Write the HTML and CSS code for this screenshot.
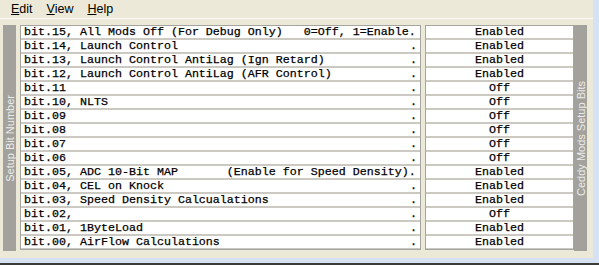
FILE: index.html
```html
<!DOCTYPE html>
<html lang="en">

  <head>
    <meta charset="UTF-8">
    <meta name="viewport" content="width=device-width, initial-scale=1.0">
    <title>Ceddy Mods Setup Bits</title>
    <link rel="stylesheet" href="styles.css">
  </head>

  <body>
    <div class="window">
      <div class="menubar">
        <span class="menu"><u>E</u>dit</span>
        <span class="menu"><u>V</u>iew</span>
        <span class="menu"><u>H</u>elp</span>
      </div>

      <div class="content">
        <div class="sidebar left"><span>Setup Bit Number</span></div>

        <div class="grid names">
          <div class="cell"><span class="label">bit.15, All Mods Off (For Debug Only)   0=Off, 1=Enable.</span></div>
          <div class="cell"><span class="label">bit.14, Launch Control</span><span class="dot">.</span></div>
          <div class="cell"><span class="label">bit.13, Launch Control AntiLag (Ign Retard)</span><span class="dot">.</span></div>
          <div class="cell"><span class="label">bit.12, Launch Control AntiLag (AFR Control)</span><span class="dot">.</span></div>
          <div class="cell"><span class="label">bit.11</span><span class="dot">.</span></div>
          <div class="cell"><span class="label">bit.10, NLTS</span><span class="dot">.</span></div>
          <div class="cell"><span class="label">bit.09</span><span class="dot">.</span></div>
          <div class="cell"><span class="label">bit.08</span><span class="dot">.</span></div>
          <div class="cell"><span class="label">bit.07</span><span class="dot">.</span></div>
          <div class="cell"><span class="label">bit.06</span><span class="dot">.</span></div>
          <div class="cell"><span class="label">bit.05, ADC 10-Bit MAP       (Enable for Speed Density).</span></div>
          <div class="cell"><span class="label">bit.04, CEL on Knock</span><span class="dot">.</span></div>
          <div class="cell"><span class="label">bit.03, Speed Density Calcualations</span><span class="dot">.</span></div>
          <div class="cell"><span class="label">bit.02,</span><span class="dot">.</span></div>
          <div class="cell"><span class="label">bit.01, 1ByteLoad</span><span class="dot">.</span></div>
          <div class="cell"><span class="label">bit.00, AirFlow Calculations</span><span class="dot">.</span></div>
        </div>

        <div class="grid values">
          <div class="cell">Enabled</div>
          <div class="cell">Enabled</div>
          <div class="cell">Enabled</div>
          <div class="cell">Enabled</div>
          <div class="cell">Off</div>
          <div class="cell">Off</div>
          <div class="cell">Off</div>
          <div class="cell">Off</div>
          <div class="cell">Off</div>
          <div class="cell">Off</div>
          <div class="cell">Enabled</div>
          <div class="cell">Enabled</div>
          <div class="cell">Enabled</div>
          <div class="cell">Off</div>
          <div class="cell">Enabled</div>
          <div class="cell">Enabled</div>
        </div>

        <div class="sidebar right"><span>Ceddy Mods Setup Bits</span></div>
      </div>
    </div>
    <div class="statusline"></div>
  </body>

</html>
```

FILE: styles.css
```css
body {
  margin: 0;
  width: 599px;
  height: 265px;
  overflow: hidden;
  background-color: #ece9d8;
  font-family: "Liberation Sans", Arial, sans-serif;
  user-select: none;
}

.window {
  height: 258px;
  box-sizing: border-box;
  border-right: 6px solid #d6e1f3;
  display: flex;
  flex-direction: column;
}

.menubar {
  height: 18px;
  display: flex;
  align-items: center;
  padding-left: 4px;
  font-size: 12.5px;
  color: #000;
  border-bottom: 1px solid #fbfaf6;
}

.menu {
  padding: 0 7px;
}

.content {
  display: flex;
  align-items: flex-start;
  padding: 6px 6px 0 3px;
}

.sidebar {
  width: 13px;
  height: 226px;
  background-color: #a2a19b;
  color: #ececec;
  font-size: 11px;
  display: flex;
  align-items: center;
  justify-content: center;
}

.sidebar span {
  writing-mode: vertical-rl;
  transform: rotate(180deg);
  white-space: nowrap;
}

.sidebar.left {
  margin-right: 4px;
}

.grid {
  border: 1px solid #a5a49f;
  background-color: #fff;
  font-family: "Liberation Mono", "Courier New", monospace;
  font-size: 11.67px;
  color: #000;
  -webkit-text-stroke: 0.25px #000;
}

.names {
  width: 399px;
  margin-right: 4px;
}

.values {
  width: 147px;
}

.cell {
  height: 12px;
  line-height: 12px;
  border-bottom: 2px solid #cbc9c2;
  display: flex;
  white-space: pre;
}

.grid .cell:last-child {
  border-bottom: 1px solid #cbc9c2;
}

.names .cell {
  padding: 0 3px 0 3px;
}

.values .cell {
  justify-content: center;
}

.dot {
  margin-left: auto;
}

.statusline {
  height: 5px;
  background-color: #d6e1f3;
  border-bottom: 2px solid #3b3b3b;
}
```
